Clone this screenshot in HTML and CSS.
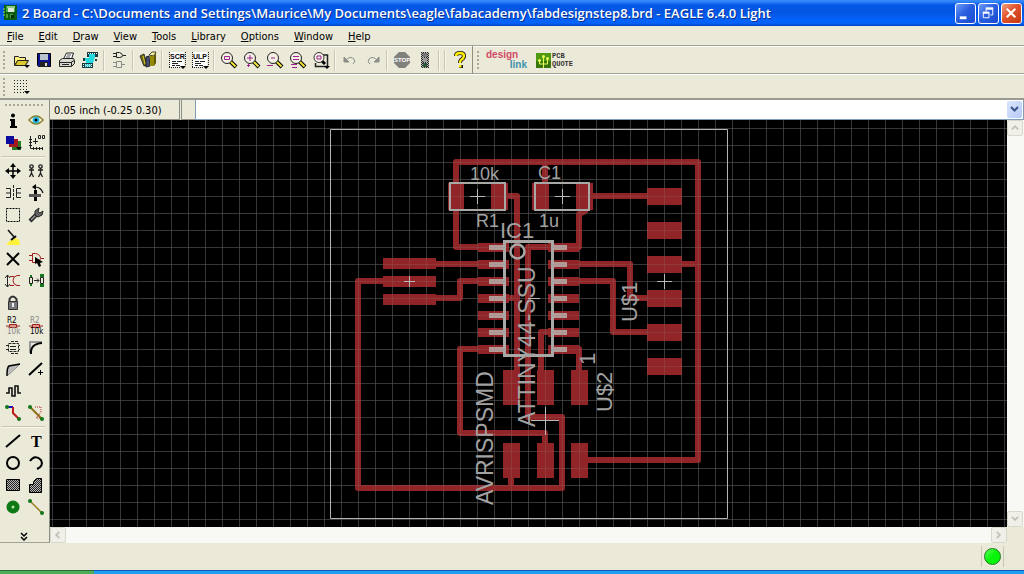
FILE: index.html
```html
<!DOCTYPE html>
<html lang="en">
<head>
<meta charset="utf-8">
<title>2 Board - EAGLE 6.4.0 Light</title>
<link rel="stylesheet" href="styles.css">
</head>
<body>
<svg class="defs" width="0" height="0" aria-hidden="true">
  <defs>
    <g id="lens"><path d="M11 11l6 6" stroke="#000" stroke-width="4"/><path d="M11.500 11.500l5 5" stroke="#f4ea30" stroke-width="2"/><circle cx="8" cy="8" r="5.500" fill="#f4f0e4" stroke="#222"/></g>
    <g id="page"><path d="M3 2h14v15H3z" fill="#fff"/><path d="M2.500 2v16M2 17.500h12M18.500 2v13" stroke="#222" stroke-dasharray="1 1"/><path d="M5 11.500h4M10 11.500h5M5 13.500h6M5 15.500h3M9 15.500h4" stroke="#222"/><path d="M13 16h6l-3 3z"/></g>
    <pattern id="dots" width="2" height="2" patternUnits="userSpaceOnUse"><path d="M0 0h2v2H0z" fill="#bbb"/><path d="M0 0h1v1H0zM1 1h1v1H1z" fill="#222"/></pattern>
    <pattern id="grid" x="1" y="9" width="17" height="17" patternUnits="userSpaceOnUse"><path d="M0 .5h17M.5 0v17" stroke="#222" fill="none"/></pattern>
    <pattern id="grid-over" x="1" y="9" width="17" height="17" patternUnits="userSpaceOnUse"><path d="M0 .5h17M.5 0v17" stroke="#8a8a8a" stroke-opacity=".2" fill="none"/></pattern>
  </defs>
</svg>
<div class="window">
  <header class="titlebar">
    <svg class="app-icon" viewBox="0 0 16 16"><path d="M2 0h13v15H2z" fill="#0b5a16"/><path d="M4 1h9v6H4z" fill="#3fae3a"/><path d="M6 3h6v4H6z" fill="#dfe8d8"/><path d="M6 1v2M8 1v2M10 1v2M12 1v2" stroke="#dfe8d8"/><path d="M1 4h2M1 7h2M1 10h2M5 9v4M8 10h3M8 12h4" stroke="#8fe05a"/><path d="M9 10h3v3H9z" fill="#052d09"/></svg>
    <h1 class="title">2 Board - C:\Documents and Settings\Maurice\My Documents\eagle\fabacademy\fabdesignstep8.brd - EAGLE 6.4.0 Light</h1>
    <div class="caption-buttons">
      <button class="caption" aria-label="Minimize"><svg viewBox="0 0 20 20"><path d="M4 13h7v3H4z" fill="#fff"/></svg></button>
      <button class="caption" aria-label="Restore"><svg viewBox="0 0 20 20"><path d="M7.500 8V5.500h7v6H12" fill="none" stroke="#fff"/><path d="M7 4.500h8" stroke="#fff" stroke-width="2"/><path d="M4.500 9.500h6v5h-6z" fill="none" stroke="#fff"/><path d="M4 9h7" stroke="#fff" stroke-width="2"/></svg></button>
      <button class="caption close" aria-label="Close"><svg viewBox="0 0 20 20"><path d="M5 5l9 9M14 5l-9 9" stroke="#fff" stroke-width="2.200"/></svg></button>
    </div>
  </header>

  <nav class="menubar">
    <button><u>F</u>ile</button><button><u>E</u>dit</button><button><u>D</u>raw</button><button><u>V</u>iew</button><button><u>T</u>ools</button><button><u>L</u>ibrary</button><button><u>O</u>ptions</button><button><u>W</u>indow</button><button><u>H</u>elp</button>
  </nav>

  <div class="toolbar" role="toolbar" aria-label="Actions">
    <span class="grip"></span>
    <button class="tool" aria-label="Open"><svg viewBox="0 0 20 20"><path d="M3.500 15V6.500h4l1 1h6V10" fill="#ffef7a" stroke="#222"/><path d="M3.500 15.500l3-5h11l-3 5z" fill="#b9a40a" stroke="#222"/><path d="M7 12h8M6 14h8" stroke="#ffee50"/><path d="M13 15h6l-3 3z"/></svg></button>
    <button class="tool" aria-label="Save"><svg viewBox="0 0 20 20"><path d="M3.500 3.500h13v13h-12l-1-1z" fill="#10148c" stroke="#000"/><path d="M6 4h8v6H6z" fill="#b8c4cc"/><path d="M6 12h8v5H6z" fill="#222"/><path d="M11 13h2v3h-2z" fill="#ddd"/></svg></button>
    <button class="tool" aria-label="Print"><svg viewBox="0 0 20 20"><path d="M6.500 9l3-6h7l-2 6z" fill="#fff" stroke="#222"/><path d="M10 5h4M9 7h4" stroke="#555"/><path d="M2.500 10.500l3-2h11l1 2v3l-3 3h-12z" fill="#d8d8d0" stroke="#222"/><path d="M3 12.500h11l3-2M5 14.500h7M14.500 12v4" stroke="#222" fill="none"/></svg></button>
    <button class="tool" aria-label="CAM processor"><svg viewBox="0 0 20 20"><path d="M7 2h11v5H7z" fill="#173c44"/><path d="M2 13h11v5H2z" fill="#173c44"/><path d="M9 4h6v3l-2 6H6v-2H4V8h5z" fill="#21d9de"/><path d="M8 3.500h10M3 14.500h10M3 16.500h10" stroke="#fff" stroke-dasharray="1 1"/><path d="M5 15.500h6" stroke="#53eef0" stroke-width="2"/><path d="M3 8h2v3H3zM15 9h2v2h-2z" fill="#173c44"/></svg></button>
    <span class="sep"></span>
    <button class="tool" aria-label="Schematic"><svg viewBox="0 0 20 20" fill="none" stroke="#222"><path d="M7.500 2.500h3q3 1 3 3 0 2-3 2h-3zM4 3.500h3M4 6.500h3M14 5.500h3"/><g stroke="#8b8b86"><path d="M7.500 11.500h5v6h-5zM4 12.500h3M4 16.500h3M13 14.500h3"/></g></svg></button>
    <span class="sep"></span>
    <button class="tool" aria-label="Library"><svg viewBox="0 0 20 20"><path d="M2 6l4-2 3 11-3 1z" fill="#6f6909" stroke="#333"/><path d="M8 7l3-1 1 10-4 1z" fill="#454f7a" stroke="#222"/><path d="M11 5l3-3h4l-2 4z" fill="#fff28c" stroke="#444"/><path d="M12 6h4v10h-4z" fill="#968b08"/><path d="M16 6l2-4v11l-2 3z" fill="#5e5807"/><path d="M5 6l2 8" stroke="#d8ca32"/></svg></button>
    <span class="sep"></span>
    <button class="tool" aria-label="Script"><svg viewBox="0 0 20 20"><use href="#page"/><text x="3" y="9" class="tiny">SCR</text></svg></button>
    <button class="tool" aria-label="ULP"><svg viewBox="0 0 20 20"><use href="#page"/><text x="3" y="9" class="tiny">ULP</text></svg></button>
    <span class="sep"></span>
    <button class="tool" aria-label="Zoom fit"><svg viewBox="0 0 20 20"><use href="#lens"/><path d="M5.500 6.500h5v3h-5z" fill="none" stroke="#a0208f"/></svg></button>
    <button class="tool" aria-label="Zoom in"><svg viewBox="0 0 20 20"><use href="#lens"/><path d="M5 8h6M8 5v6M5 15.500h3M6.500 14v3" stroke="#a0208f"/></svg></button>
    <button class="tool" aria-label="Zoom out"><svg viewBox="0 0 20 20"><use href="#lens"/><path d="M6 8h4M2 15.500h6" stroke="#a0208f"/></svg></button>
    <button class="tool" aria-label="Redraw"><svg viewBox="0 0 20 20"><use href="#lens"/><path d="M5 6.500h6M5 9.500h6M3 14.500h6M4 17.500h5" stroke="#a0208f"/></svg></button>
    <button class="tool" aria-label="Zoom select"><svg viewBox="0 0 20 20"><path d="M11 5h5.500v11.500h-12V13" fill="none" stroke="#222" stroke-width="1.500"/><path d="M11 11l3 3" stroke="#000" stroke-width="3"/><circle cx="8" cy="7.500" r="5" fill="#f4f0e4" stroke="#333"/><path d="M6 6h4v3H6z" fill="none" stroke="#a0208f"/><path d="M13 16h6l-3 3z"/></svg></button>
    <span class="sep"></span>
    <button class="tool" aria-label="Undo" disabled><svg viewBox="0 0 20 20" fill="none" stroke="#8e8e88"><path d="M5 11q5-6 9-2 2 3-1 5"/><path d="M4 7v5h5z" fill="#8e8e88"/></svg></button>
    <button class="tool" aria-label="Redo" disabled><svg viewBox="0 0 20 20" fill="none" stroke="#8e8e88"><path d="M15 11q-5-6-9-2-2 3 1 5"/><path d="M16 7v5h-5z" fill="#8e8e88"/></svg></button>
    <span class="sep"></span>
    <button class="tool" aria-label="Stop" disabled><svg viewBox="0 0 20 20"><path d="M7 2h6l5 5v6l-5 5H7l-5-5V7z" fill="#80807c"/><text x="2" y="12" class="stop">STOP</text></svg></button>
    <button class="tool" aria-label="Go" disabled><svg viewBox="0 0 20 20"><path d="M6 2h8v16H6z" fill="url(#dots)"/><path d="M8 3h4v4H8z" fill="#777"/><path d="M8 8h4v4H8z" fill="#999"/><path d="M8 13h4v4H8z" fill="#285c38"/></svg></button>
    <span class="sep"></span><span class="sep"></span>
    <button class="tool" aria-label="Help"><svg viewBox="0 0 20 20" fill="none"><path d="M6 6q0-3 4-3 4 0 4 3 0 2-3 4-1 1-1 3" stroke="#111" stroke-width="4"/><path d="M9 15h4v3H9z" fill="#111"/><path d="M6 6q0-3 4-3 4 0 4 3 0 2-3 4-1 1-1 3" stroke="#ffef00" stroke-width="2.400"/><path d="M9 15h2.500v2.500H9z" fill="#ffef00"/></svg></button>
    <span class="bar-edge"></span>
    <span class="grip"></span>
    <a class="design-link" href="#designlink"><span>design</span><span class="link-word">link</span></a>
    <a class="pcb-quote" href="#pcbquote"><svg viewBox="0 0 15 15"><path d="M0 0h15v15H0z" fill="#4f9a10"/><path d="M0 8h15v7H0z" fill="#38760b"/><path d="M7.500 15V4M3.500 8v3h4M11.500 6v5h-4" fill="none" stroke="#e6ff5a"/><circle cx="7.500" cy="3.500" r="1.500" fill="#e6ff5a"/><circle cx="3.500" cy="7.500" r="1.500" fill="#e6ff5a"/><circle cx="11.500" cy="5.500" r="1.500" fill="#e6ff5a"/></svg><span>PCB<br>QUOTE</span></a>
  </div>

  <div class="toolbar parameters" role="toolbar" aria-label="Parameters">
    <span class="grip"></span>
    <button class="tool" aria-label="Grid"><svg viewBox="0 0 20 20"><path d="M3 3.500h14M3 6.500h14M3 9.500h14M3 12.500h14M3 15.500h11" stroke="#222" stroke-dasharray="1 2"/><path d="M13 14h6l-3 3z"/></svg></button>
  </div>

  <main class="workspace">
    <aside class="palette" role="toolbar" aria-label="Commands">
      <span class="grip-wide"></span>
      <div class="tools">
        <button aria-label="Info"><svg viewBox="0 0 20 20"><circle cx="10" cy="4.500" r="2"/><path d="M7 8h5v7h2v2H7v-2h1v-5H7z"/></svg></button>
        <button aria-label="Show"><svg viewBox="0 0 20 20"><path d="M3 9q7-8 14 0-7 8-14 0z" fill="#fff" stroke="#8a7a1c" stroke-width="1.500"/><circle cx="10" cy="9" r="3.500" fill="#27b9dc"/><circle cx="10" cy="9" r="1.500"/></svg></button>
        <button aria-label="Display"><svg viewBox="0 0 20 20"><path d="M9 8h9v9H9z" fill="#2c7a24"/><path d="M6 6h9v8H6z" fill="#a51820"/><path d="M3 3h8v8H3z" fill="#0c0c9c"/><path d="M13 14h6l-3 3z"/></svg></button>
        <button aria-label="Mark"><svg viewBox="0 0 20 20" fill="none" stroke="#222"><path d="M4.500 3v12.500H17M3 6.500h3M3 9.500h3M3 12.500h3M7.500 14v3M10.500 14v3M13.500 14v3M16.500 14v3M9.500 5v6M7 8.500h5M12.500 2.500h2v3h-2zM16.500 2.500h2v3h-2z"/></svg></button>
        <hr>
        <button aria-label="Move"><svg viewBox="0 0 20 20"><path d="M10 4v12M4 10h12" stroke="#000" stroke-width="1.500"/><path d="M10 2l3 4H7zM10 18l3-4H7zM2 10l4-3v6zM18 10l-4-3v6z"/></svg></button>
        <button aria-label="Copy"><svg viewBox="0 0 20 20" fill="none" stroke="#222" stroke-width="1.300"><circle cx="5.500" cy="5.500" r="1.700"/><circle cx="14.500" cy="5.500" r="1.700"/><path d="M5.500 7v5l-2 4M5.500 12l2 4M3 9h5M14.500 7v5l-2 4M14.500 12l2 4M12 9h5"/></svg></button>
        <button aria-label="Mirror"><svg viewBox="0 0 20 20" fill="none" stroke="#222"><path d="M10.500 2v16" stroke-dasharray="3 1"/><path d="M3 5.500h4.500v9H3M3 10h4M18 5.500h-4.500v9H18M18 10h-4"/></svg></button>
        <button aria-label="Rotate"><svg viewBox="0 0 20 20"><path d="M8 7h3v11H8z"/><path d="M3 11h12v3H3z" fill="#555"/><path d="M9 4q6 0 8 6" fill="none" stroke="#000" stroke-width="1.200"/><path d="M10 1L6 4l4 3z"/></svg></button>
        <button aria-label="Group"><svg viewBox="0 0 20 20"><path d="M3.500 3.500h13v13h-13z" fill="none" stroke="#000" stroke-dasharray="2 1"/></svg></button>
        <button aria-label="Change"><svg viewBox="0 0 20 20"><path d="M4 16l8-8" stroke="#222" stroke-width="4"/><path d="M5 15l8-8" stroke="#999" stroke-width="1.500"/><path d="M9 10V6l4-3-1 4 2 1 3-2-1 4-4 2z" fill="#666" stroke="#222"/></svg></button>
        <button aria-label="Paste"><svg viewBox="0 0 20 20"><path d="M5 3l7 8" stroke="#111" stroke-width="1.500"/><path d="M8 13l5-2 3 2 1 5H3z" fill="#fff238"/><path d="M8 13l5-4" stroke="#111" stroke-width="2"/></svg></button>
        <span></span>
        <button aria-label="Delete"><svg viewBox="0 0 20 20"><path d="M4 4l12 12M16 4L4 16" stroke="#000" stroke-width="2"/></svg></button>
        <button aria-label="Add"><svg viewBox="0 0 20 20" fill="none" stroke="#a02020"><path d="M6.500 4.500h3q5 1 5 5 0 3-5 4h-3zM3 6.500h3M3 11.500h3M15 9.500h3"/><path d="M9 8l8 5-3 1 1 3-2 1-2-4-2 1z" fill="#000" stroke="none"/></svg></button>
        <button aria-label="Pinswap"><svg viewBox="0 0 20 20" fill="none" stroke="#a02020"><path d="M17 4.500h-3q-4 1-4 5 0 4 4 5h3M7 5.500h4M7 14.500h4"/><path d="M4.500 4v12M2 7l2.500-3L7 7M2 13l2.500 3L7 13" stroke="#222"/></svg></button>
        <button aria-label="Replace"><svg viewBox="0 0 20 20" fill="none" stroke="#222"><path d="M3.500 6.500h3v6h-3zM14.500 6.500h3v6h-3zM8 9.500h5M11 7.500l2 2-2 2"/><path d="M14 3h4v3h-4zM14 13h4v3h-4zM4 4h2v2H4zM4 13h2v2H4z" fill="#147a20" stroke="none"/></svg></button>
        <button aria-label="Lock"><svg viewBox="0 0 20 20"><path d="M6.500 9V6q3-5 7 0v3" fill="none" stroke="#333" stroke-width="2"/><path d="M5.500 8.500h9v8h-9z" fill="#77777a" stroke="#333"/><path d="M10 10v4" stroke="#eee" stroke-width="2"/></svg></button>
        <span></span>
        <button aria-label="Name"><svg viewBox="0 0 20 20"><text x="4" y="8" class="part">R2</text><path d="M3 11h14" stroke="#a02020"/><path d="M6.500 9.500h7v3h-7z" fill="#d98" stroke="#a02020"/><text x="4" y="19" class="part dim">10k</text></svg></button>
        <button aria-label="Value"><svg viewBox="0 0 20 20"><text x="4" y="8" class="part dim">R2</text><path d="M3 11h14" stroke="#a02020"/><path d="M6.500 9.500h7v3h-7z" fill="#d98" stroke="#a02020"/><text x="4" y="19" class="part">10k</text></svg></button>
        <button aria-label="Smash"><svg viewBox="0 0 20 20" fill="none" stroke="#222"><path d="M5.500 6.500h10v8h-10zM3 8.500h2M3 12.500h2M16 8.500h1M16 12.500h1M8 4.500h7M8 16.500h7" stroke-dasharray="3 1"/><path d="M7 9.500h6M7 12.500h6"/></svg></button>
        <button aria-label="Miter"><svg viewBox="0 0 20 20" fill="none"><path d="M4 16V5h12" stroke="#999" stroke-width="2"/><path d="M5 17q-1-10 11-11" stroke="#000" stroke-width="2"/></svg></button>
        <button aria-label="Split"><svg viewBox="0 0 20 20"><path d="M5 15V7l11-2z" fill="#bbb"/><path d="M4 17q0-9 2-10l11-2" fill="none" stroke="#000" stroke-width="1.500"/><path d="M5 16L16 6" stroke="#777"/></svg></button>
        <button aria-label="Optimize"><svg viewBox="0 0 20 20"><path d="M3 16L16 4" stroke="#000" stroke-width="2"/><path d="M12 13.500h5M14.500 11v5" stroke="#000"/></svg></button>
        <button aria-label="Meander"><svg viewBox="0 0 20 20"><path d="M3 12h3V7h3v8h3V5h3v7h3" fill="none" stroke="#111" stroke-width="1.600"/></svg></button>
        <span></span>
        <button aria-label="Route"><svg viewBox="0 0 20 20" fill="none" stroke-width="2"><path d="M4 4h6" stroke="#1212c4"/><path d="M10 4v6l6 6" stroke="#c01c18"/><circle cx="4" cy="4" r="1" stroke="#107818"/><circle cx="16" cy="16" r="1" stroke="#107818"/></svg></button>
        <button aria-label="Ripup"><svg viewBox="0 0 20 20" fill="none"><path d="M4 4l12 12" stroke="#907018" stroke-width="2"/><path d="M9 4h6v5l-5 6h6" stroke="#b02020" stroke-dasharray="1 1"/><circle cx="4" cy="4" r="2" fill="#107818"/><circle cx="16" cy="16" r="2" fill="#107818"/></svg></button>
        <hr>
        <button aria-label="Wire"><svg viewBox="0 0 20 20"><path d="M3 16L17 4" stroke="#000" stroke-width="2"/></svg></button>
        <button aria-label="Text"><svg viewBox="0 0 20 20"><text x="5" y="16" class="letter">T</text></svg></button>
        <button aria-label="Circle"><svg viewBox="0 0 20 20"><circle cx="10" cy="10" r="6" fill="none" stroke="#000" stroke-width="2"/></svg></button>
        <button aria-label="Arc"><svg viewBox="0 0 20 20"><path d="M4 8q5-7 11-1 3 6-4 9" fill="none" stroke="#000" stroke-width="2"/></svg></button>
        <button aria-label="Rectangle"><svg viewBox="0 0 20 20"><path d="M3.500 4.500h13v11h-13z" fill="url(#dots)" stroke="#000"/></svg></button>
        <button aria-label="Polygon"><svg viewBox="0 0 20 20"><path d="M3.500 17.500v-8h4v-3l3-3h5v14z" fill="url(#dots)" stroke="#000"/></svg></button>
        <button aria-label="Via"><svg viewBox="0 0 20 20"><circle cx="10" cy="10" r="6.500" fill="#0d7a16"/><circle cx="10" cy="10" r="1.500" fill="#b8e0a8"/></svg></button>
        <button aria-label="Signal"><svg viewBox="0 0 20 20"><path d="M4 4l12 12" stroke="#988128" stroke-width="1.500"/><circle cx="4" cy="4" r="2" fill="#107818"/><circle cx="16" cy="16" r="2" fill="#107818"/></svg></button>
      </div>
      <button class="more" aria-label="More commands"><svg viewBox="0 0 8 10"><path d="M1 1l3 3 3-3M1 5l3 3 3-3" fill="none" stroke="#000" stroke-width="1.500"/></svg></button>
    </aside>

    <section class="editor">
      <div class="command-row">
        <output class="coords">0.05 inch (-0.25 0.30)</output>
        <span class="mini"></span>
        <div class="combo">
          <input type="text" aria-label="Command line">
          <button aria-label="Command history"><svg viewBox="0 0 9 7"><path d="M1 1l3.500 3.500L8 1" fill="none" stroke="#3b5488" stroke-width="2"/></svg></button>
        </div>
      </div>
      <div class="view">
        <svg class="board" role="img" aria-label="Circuit board layout">
          <g transform="translate(-50 -120)">
            <rect class="fill-all" fill="url(#grid)"/>
            <path class="trace" d="M480 247H456V162H698V460H585M545 162V186M505 196H517V375M585 211L579 214V247H565M590 196H650M565 264H630V298H650M565 281H613V332H650M680 264H698M434 264H482M434 298H460V281H482M385 281H358V488H562V417H528V247H555M555 332H541V375M505 298H517M482 349H460V433H545V446M565 349H579V374M511 476V488"/>
            <path class="copper" d="M448 183h16v27h-16zM491 183h17v27h-17zM532 183h17v27h-17zM576 183h17v27h-17zM647 188h35v17h-35zM647 222h35v17h-35zM647 256h35v17h-35zM647 290h35v17h-35zM647 324h35v17h-35zM647 358h35v17h-35zM383 258h53v11h-53zM383 276h53v11h-53zM383 294h53v11h-53zM503 370h17v35h-17zM537 370h17v35h-17zM571 370h17v35h-17zM503 443h17v35h-17zM537 443h17v35h-17zM571 443h17v35h-17z"/>
            <path class="pads" d="M478 247.500h31M478 264.500h31M478 281.500h31M478 298.500h31M478 315.500h31M478 332.500h31M478 349.500h31M548 247.500h31M548 264.500h31M548 281.500h31M548 298.500h31M548 315.500h31M548 332.500h31M548 349.500h31"/>
            <path class="pins" d="M489 247.500h15M489 264.500h15M489 281.500h15M489 298.500h15M489 315.500h15M489 332.500h15M489 349.500h15M553 247.500h14M553 264.500h14M553 281.500h14M553 298.500h14M553 315.500h14M553 332.500h14M553 349.500h14"/>
            <g class="silk">
              <path stroke-width="3" d="M504.500 241.500h48v114h-48z"/>
              <circle cx="517.500" cy="251.500" r="7" stroke-width="2.500"/>
              <path stroke-width="2" d="M450 183h55v27h-55zM535 183h54v27h-54z"/>
            </g>
            <rect class="fill-all" fill="url(#grid-over)"/>
            <path class="outline" d="M330.500 129.500h397v389h-397z"/>
            <path class="cross" d="M404 281.500h11M409.500 276v11M470 196.500h15M477.500 189v15M555 196.500h15M562.500 189v15M657 281.500h15M664.500 274v15M531 420.500h28M545.500 407v28M528 298.500h12"/>
            <g class="label small">
              <text x="470" y="180">10k</text><text x="476" y="227">R1</text><text x="538" y="179">C1</text><text x="539" y="227">1u</text>
            </g>
            <g class="label">
              <text x="500" y="238">IC1</text>
              <text class="long" transform="translate(493 505) rotate(-90)">AVRISPSMD</text>
              <text class="long" transform="translate(535 427) rotate(-90)">ATTINY44-SSU</text>
              <text transform="translate(637 322) rotate(-90)">U$1</text>
              <text transform="translate(612 412) rotate(-90)">U$2</text>
              <text transform="translate(595 365) rotate(-90)">1</text>
            </g>
          </g>
        </svg>
        <div class="scroll vertical">
          <button aria-label="Scroll up" disabled><svg viewBox="0 0 9 7"><path d="M1 5l3.500-3.500L8 5" /></svg></button>
          <button aria-label="Scroll down" disabled><svg viewBox="0 0 9 7"><path d="M1 1l3.500 3.500L8 1"/></svg></button>
        </div>
        <div class="scroll horizontal">
          <button aria-label="Scroll left" disabled><svg viewBox="0 0 7 9"><path d="M5 1L1.500 4.500 5 8"/></svg></button>
          <button aria-label="Scroll right" disabled><svg viewBox="0 0 7 9"><path d="M1 1l3.500 3.500L1 8"/></svg></button>
        </div>
      </div>
    </section>
  </main>

  <footer class="status"><span class="lamp-box"><span class="lamp"></span></span></footer>
  <div class="taskbar"><span class="start"></span></div>
</div>
</body>
</html>
```
FILE: styles.css
```css
* { box-sizing: border-box; }
body { margin: 0; font: 11px/14px "DejaVu Sans Condensed", "Noto Sans", sans-serif; color: #000; }
button { margin: 0; padding: 0; border: 0; background: none; font: inherit; color: inherit; }
svg { display: block; }
.defs { position: absolute; }
.window { display: flex; flex-direction: column; height: 100vh; background: #ebe9d8; overflow: hidden; }

.titlebar { display: flex; align-items: center; flex: none; height: 26px; padding: 0 2px 0 2px;
  background: linear-gradient(#3c8ef8 0, #2a7ef6 2px, #0558e6 5px, #0355e2 12px, #0462fa 20px, #0463fb 23px, #0344c2 26px); }
.app-icon { width: 16px; height: 16px; margin-right: 4px; }
.title { flex: 1; margin: 0; font: 600 13px/20px "Open Sans", sans-serif; color: #fff; text-shadow: 1px 1px 0 #0a2f8c; white-space: nowrap; overflow: hidden; }
.caption-buttons { display: flex; gap: 2px; }
.caption { width: 21px; height: 21px; border: 1px solid #fff; border-radius: 3px; background: linear-gradient(135deg, #6f9df8, #2a5fe0 45%, #1b4bd0); }
.caption.close { background: linear-gradient(135deg, #f0a080, #e0512c 45%, #c63a12); }
.caption svg { width: 19px; height: 19px; }

.menubar { display: flex; flex: none; gap: 15px; height: 20px; padding: 3px 7px 0; border-bottom: 1px solid #a3a297; }
.menubar u { text-underline-offset: 1px; }

.toolbar { display: flex; align-items: center; flex: none; height: 28px; border-top: 1px solid #fff; border-bottom: 1px solid #a3a297; padding-left: 3px; }
.toolbar.parameters { height: 26px; border-bottom: 2px solid #9a9a90; }
.grip { width: 3px; height: 18px; margin-right: 3px; background: repeating-linear-gradient(#a9a898 0 2px, transparent 2px 4px); background-size: 2px 100%; background-repeat: no-repeat; }
.tool { width: 23px; height: 24px; display: grid; place-items: center; flex: none; }
.tool svg { width: 20px; height: 20px; }
.sep { flex: none; width: 6px; height: 21px; border-left: 2px solid transparent; background: linear-gradient(90deg, #c9c6b4 1px, #f8f7ee 1px 2px, transparent 2px) no-repeat; }
.bar-edge { width: 5px; height: 28px; border-left: 1px solid #8f8e84; margin-left: 1px; }
.tiny { font: bold 7px "Liberation Sans", sans-serif; }
.stop { font: bold 6px "Liberation Sans", sans-serif; fill: #fff; }
.design-link { display: flex; flex-direction: column; width: 41px; margin: 0 9px 0 3px; font: bold 10px/10px "Liberation Sans", sans-serif; color: #d24b66; text-decoration: none; }
.link-word { align-self: flex-end; color: #3c93ad; }
.pcb-quote { display: flex; align-items: center; gap: 1px; font: bold 7px/8px "Liberation Mono", monospace; color: #333; text-decoration: none; }
.pcb-quote svg { width: 15px; height: 15px; }

.workspace { display: flex; flex: 1; min-height: 0; }
.palette { display: flex; flex-direction: column; flex: none; width: 50px; padding: 3px 3px 0 1px; border-right: 1px solid #8f8e84; border-bottom: 1px solid #a3a297; }
.grip-wide { flex: none; height: 2px; margin: 1px 3px 4px 4px; background: repeating-linear-gradient(90deg, #a9a898 0 2px, transparent 2px 4px); }
.tools { display: grid; grid-template-columns: 23px 23px; grid-auto-rows: auto; }
.tools button, .tools > span { height: 22px; display: grid; place-items: center; }
.tools svg { width: 20px; height: 20px; }
.tools hr { grid-column: 1 / 3; width: 44px; height: 2px; margin: 2px 0; border: 0; border-top: 1px solid #c9c6b4; border-bottom: 1px solid #f8f7ee; }
.part { font: 8px "DejaVu Sans Condensed", sans-serif; }
.part.dim { fill: #888; }
.letter { font: bold 16px "Liberation Serif", serif; }
.more { margin: auto auto 0; }
.more svg { width: 8px; height: 10px; }

.editor { display: flex; flex: 1; flex-direction: column; min-width: 0; }
.command-row { display: flex; flex: none; height: 20px; }
.coords { width: 130px; padding: 4px 4px 0; border: 1px solid #8f8e84; border-width: 0 1px 1px 0; white-space: nowrap; }
.mini { width: 14px; margin-left: 1px; border-left: 1px solid #8f8e84; border-bottom: 1px solid #8f8e84; }
.combo { display: flex; flex: 1; border: 1px solid #7f9db9; border-top: 0; background: #fff; }
.combo input { flex: 1; min-width: 0; border: 0; padding: 0 3px; background: transparent; font: inherit; outline: 0; }
.combo button { display: grid; place-items: center; width: 15px; margin: 1px; border-radius: 2px; background: linear-gradient(135deg, #dbe6fd, #b4c9f7); }
.combo svg { width: 9px; height: 7px; }

.view { display: grid; flex: 1; min-height: 0; grid-template: minmax(0, 1fr) 16px / minmax(0, 1fr) 17px; }
.board { width: 100%; height: 100%; background: #000; }
.fill-all { x: 50px; y: 120px; width: 100%; height: 100%; }
.trace { fill: none; stroke: #902427; stroke-width: 6; stroke-linejoin: round; stroke-linecap: round; }
.copper { fill: #902427; }
.pads { stroke: #902427; stroke-width: 9; }
.pins { stroke: #b39b98; stroke-width: 5; }
.silk { fill: none; stroke: #a8a8a6; }
.outline { fill: none; stroke: #b4b4b4; }
.cross { stroke: #b8b8b8; }
.label { font: 22px "Liberation Sans", sans-serif; fill: #a2a2a2; }
.label.small { font-size: 18px; }
.long { font-size: 23px; }
.scroll { display: flex; justify-content: space-between; background: #f8f8f4; }
.scroll.vertical { flex-direction: column; }
.scroll button { display: grid; place-items: center; width: 16px; height: 16px; border: 1px solid #d9d8cc; border-radius: 2px; background: #f1f0e8; }
.scroll svg { width: 8px; height: 8px; }
.scroll path { fill: none; stroke: #c2c1b8; stroke-width: 2; }

.status { display: flex; justify-content: flex-end; align-items: center; flex: none; height: 27px; padding-right: 20px; }
.lamp-box { display: grid; place-items: center; width: 23px; height: 21px; border-left: 1px solid #c9c6b4; border-right: 1px solid #c9c6b4; }
.lamp { width: 17px; height: 17px; border: 1px solid #1d7a1d; border-radius: 50%; background: linear-gradient(135deg, #5cff5c, #08f408 50%); }
.taskbar { display: flex; flex: none; height: 4px; background: linear-gradient(#1256b8 1px, #1f9df0 1px); }
.start { width: 94px; background: linear-gradient(#2b6a3a 1px, #4cae58 1px); }
```
